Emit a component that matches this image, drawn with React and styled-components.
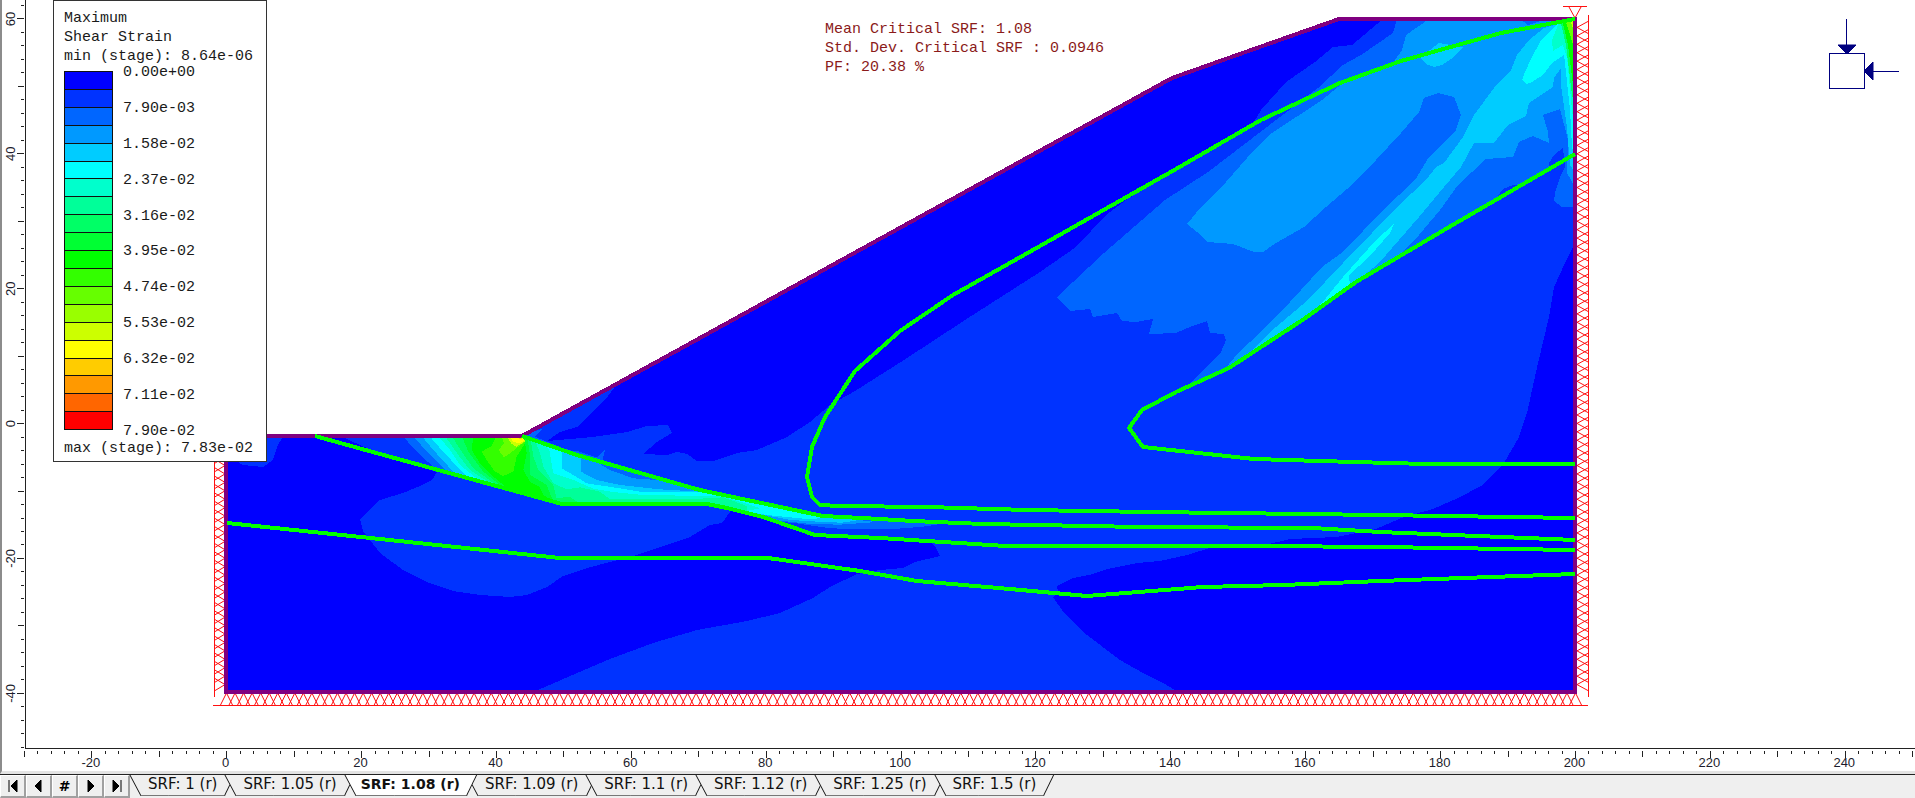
import React, { useState } from "react";
import styled, { createGlobalStyle, css } from "styled-components";

const GlobalStyle = createGlobalStyle`
  html,
  body,
  #root {
    height: 100%;
    margin: 0;
  }
`;

const Window = styled.div`
  display: flex;
  flex-direction: column;
  height: 100%;
  overflow: hidden;
  background: #ffffff;
`;

const Workspace = styled.main`
  flex: 1;
  min-height: 0;
  display: grid;
  grid-template-columns: 25px minmax(0, 1fr);
  grid-template-rows: minmax(0, 1fr) 25px;
`;

const RulerSvg = styled.svg`
  display: block;
  width: 100%;
  height: 100%;
  overflow: hidden;
  box-sizing: border-box;

  line {
    stroke: #222222;
    shape-rendering: crispEdges;
  }

  text {
    font-family: "Liberation Sans", Arial, sans-serif;
    font-size: 13px;
    fill: #1c1c2c;
    text-anchor: middle;
  }
`;

const VerticalRuler = styled(RulerSvg)`
  border-left: 2px solid #8c8c8c;
`;

const HorizontalRuler = styled(RulerSvg)`
  grid-column: 1 / -1;
  border-left: 2px solid #8c8c8c;
  border-bottom: 3px solid #e3e3e3;
`;

const Canvas = styled.section`
  position: relative;
  overflow: hidden;
  border-left: 1px solid #222222;
  border-bottom: 1px solid #222222;
`;

const ModelSvg = styled.svg`
  display: block;
  width: 100%;
  height: 100%;
`;

const Legend = styled.aside`
  position: absolute;
  top: 0;
  left: 27px;
  width: 214px;
  box-sizing: border-box;
  padding: 8px 9px 3px 10px;
  border: 1px solid #333333;
  background: #ffffff;
  color: #1a1a1a;
  font: 15px/19px "Liberation Mono", "Courier New", monospace;
  white-space: nowrap;
`;

const LegendScale = styled.div`
  display: flex;
  gap: 10px;
  height: 359px;
  margin: 5px 0 9px;
`;

const ColorBar = styled.div`
  display: flex;
  flex-direction: column;
  width: 49px;
  box-sizing: border-box;
  border: 1px solid #111111;
`;

const Swatch = styled.div`
  flex: 1;
  background: ${props => props.$color};

  & + & {
    border-top: 1px solid #111111;
  }
`;

const LegendValues = styled.div`
  display: flex;
  flex-direction: column;
  justify-content: space-between;

  span {
    height: 0;
    line-height: 4px;
  }
`;

const Summary = styled.div`
  position: absolute;
  top: 20px;
  left: 799px;
  color: #8b1a1a;
  font: 15px/19px "Liberation Mono", "Courier New", monospace;
  white-space: nowrap;
`;

const StageBar = styled.nav`
  display: flex;
  height: 24px;
  box-sizing: border-box;
  border-top: 1px solid #222222;
  background: #efefef;
  font-family: "DejaVu Sans", Verdana, sans-serif;
`;

const NavButton = styled.button`
  display: flex;
  align-items: center;
  justify-content: center;
  width: 26px;
  height: 23px;
  padding: 0;
  border: 1px solid #ffffff;
  border-right: 2px solid #a0a0a0;
  border-bottom: 2px solid #a0a0a0;
  background: #efefef;
  color: #000000;
  font: bold 14px "DejaVu Sans", Verdana, sans-serif;
`;

const Tabs = styled.div`
  display: flex;
`;

const edge = css`
  content: "";
  position: absolute;
  z-index: -1;
  top: 0;
  width: 60%;
  height: 21px;
  box-sizing: border-box;
  border-bottom: 1px solid #777777;
`;

const Tab = styled.button`
  position: relative;
  z-index: ${props => (props.$active ? 1 : 0)};
  height: 21px;
  padding: ${props => (props.$active ? "0 7px 0 16px" : "0 8px 0 18px")};
  border: none;
  background: none;
  color: #111111;
  font-family: inherit;
  font-size: ${props => (props.$active ? "14px" : "15px")};
  font-weight: ${props => (props.$active ? "bold" : "normal")};
  line-height: 19px;
  white-space: nowrap;

  &::before {
    ${edge}
    left: 5px;
    border-left: 1px solid #111111;
    background: ${props => (props.$active ? "#ffffff" : "#efefef")};
    transform: skewX(28deg);
  }

  &::after {
    ${edge}
    right: -5px;
    border-right: 1px solid #111111;
    background: ${props => (props.$active ? "#ffffff" : "#efefef")};
    transform: skewX(-26deg);
  }
`;

const TabLabel = styled.span`
  display: block;
  height: 21px;
`;

const PALETTE = [
  "#0000ff", "#0033ff", "#0066ff", "#0099ff", "#00ccff",
  "#00ffff", "#00ffcc", "#00ff99", "#00ff66", "#00ff33",
  "#00ff00", "#33ff00", "#66ff00", "#99ff00", "#ccff00",
  "#ffff00", "#ffcc00", "#ff9900", "#ff6600", "#ff0000"
];

const LEGEND_VALUES = [
  "0.00e+00", "7.90e-03", "1.58e-02", "2.37e-02", "3.16e-02", "3.95e-02",
  "4.74e-02", "5.53e-02", "6.32e-02", "7.11e-02", "7.90e-02"
];

const STAGES = ["1", "1.05", "1.08", "1.09", "1.1", "1.12", "1.25", "1.5"];

const SCALE = 6.744;
const toX = x => 226.7 + x * SCALE;
const toY = y => 423.6 - y * SCALE;

const range = (from, to, step) => {
  const list = [];
  for (let v = from; v <= to; v += step) list.push(v);
  return list;
};

const tickSize = v => (v % 20 === 0 ? 6 : v % 10 === 0 ? 5 : 2);

const OUTLINE =
  "226,436 522,436 1172,78 1339,19 1575,19 1575,692 226,692";

// [palette level, outline], painted from the lowest level to the highest
const CONTOURS = [
  [1, "1383,19 1352,45 1333,47 1315,62 1286,82 1261,110 1254,122 1126,200 1106,215 1076,247 1040,272 965,320 904,360 855,391 830,405 810,422 787,437 757,450 737,453 713,461 697,461 687,454 677,452 667,455 643,454 657,442 672,433 668,425 647,426 627,432 593,437 547,441 560,432 577,427 605,400 617,384 522,436 340,436 200,436 200,693 1575,693 1575,19"],
  [0, "1575,243 1565,263 1554,287 1549,317 1538,363 1527,413 1519,437 1504,463 1497,470 1483,485 1458,498 1433,509 1404,517 1376,529 1337,537 1290,539 1265,545 1210,548 1187,555 1160,561 1137,563 1107,569 1093,574 1073,578 1057,586 1058,592 1053,597 1064,613 1087,635 1120,660 1143,673 1163,683 1180,693 1575,693"],
  [0, "226,693 531,693 561,680 610,659 653,643 697,630 747,621 780,613 813,598 830,587 857,574 880,570 903,568 915,562 940,556 935,546 926,539 880,538 815,534 763,517 730,508 730,512 722,523 710,525 690,537 667,545 633,556 610,562 587,568 563,576 547,587 527,595 510,597 480,595 453,591 427,582 403,570 380,553 363,531 360,519 372,507 380,500 403,493 420,486 432,480 437,472 380,454 340,436 226,436"],
  [1, "226,436 283,436 277,447 273,460 263,467 243,465 226,455"],
  [2, "1397,19 1393,33 1361,55 1343,65 1318,88 1208,172 1165,200 1104,253 1057,297 1070,311 1090,309 1093,317 1117,313 1122,321 1136,322 1153,319 1149,334 1176,333 1190,327 1207,321 1210,333 1224,334 1226,340 1221,352 1208,365 1186,388 1229,368 1304,319 1356,282 1443,230 1500,197 1549,168 1549,163 1554,155 1563,148 1565,167 1560,177 1555,193 1554,201 1562,207 1575,207 1575,19"],
  [1, "1498,196 1503,189 1513,185 1520,186"],
  [3, "1429,19 1406,35 1402,50 1393,63 1343,83 1322,100 1272,133 1254,150 1226,182 1201,207 1187,224 1197,232 1208,242 1233,244 1254,252 1263,252 1276,243 1304,227 1326,207 1354,183 1376,160 1401,133 1419,112 1424,98 1438,93 1454,97 1461,115 1456,130 1429,157 1415,180 1383,210 1343,252 1322,267 1290,302 1261,332 1238,353 1225,369 1304,319 1356,282 1397,257 1419,235 1440,210 1458,185 1486,159 1513,157 1519,142 1533,136 1549,143 1548,132 1543,115 1560,109 1568,140 1567,173 1575,187 1575,19"],
  [2, "1520,19 1528,25 1547,19"],
  [4, "1439,43 1430,50 1420,58 1426,64 1434,67 1442,65 1454,57 1463,47"],
  [4, "1250,352 1269,333 1308,300 1343,263 1372,233 1397,207 1426,180 1436,167 1444,163 1463,137 1474,115 1494,88 1511,70 1517,55 1529,40 1544,28 1575,19 1575,173 1570,165 1567,128 1561,85 1561,68 1554,78 1553,87 1529,103 1526,116 1508,125 1494,143 1474,143 1461,167 1444,187 1419,217 1379,263 1356,282 1304,319"],
  [5, "1394,224 1376,240 1343,277 1326,298 1310,315 1350,286 1349,275 1369,257 1390,233"],
  [5, "1562,19 1553,28 1540,42 1532,57 1525,72 1522,80 1527,84 1532,82 1543,75 1552,63 1564,55 1565,63 1570,110 1572,147 1575,157 1575,19"],
  [6, "1561,19 1558,25 1552,40 1553,51 1563,45 1567,57 1572,110 1575,135 1575,19"],
  [8, "1560,19 1566,45 1572,95 1575,105 1575,19"],
  [10, "1562,19 1568,45 1573,85 1575,90 1575,19"],
  [12, "1565,19 1571,38 1575,50 1575,19"],
  [14, "1570,19 1575,34 1575,19"]
];

// Shear band below the toe, on a grid three times finer than the model
const TOE_CONTOURS = [
  [2, "68,108 110,155 175,214 545,312 980,314 1060,328 1190,364 1250,370 1330,382 1400,388 1500,388 1530,388 1630,380 1700,369 1330,348 960,270 427,107"],
  [2, "427,107 490,85 465,110 560,150 600,155 650,172 675,150 665,190"],
  [3, "100,108 140,155 210,224 545,312 980,314 1060,328 1200,362 1290,372 1380,374 1490,366 1330,348 920,262 830,240 760,235 690,210 650,186 427,107"],
  [4, "125,108 160,150 235,232 545,312 980,314 1060,328 1190,352 1230,360 1330,366 1385,368 1440,360 1330,348 960,275 840,268 720,255 650,240 603,215 603,165 427,107"],
  [5, "148,108 185,150 270,241 545,312 980,314 1060,328 1160,345 1290,358 1340,352 1130,305 960,276 780,275 700,262 620,250 580,225 545,205 545,150 427,107"],
  [6, "175,108 210,150 240,195 310,251 545,312 980,314 1100,333 1140,325 1090,308 1030,290 960,287 800,286 700,276 640,266 580,240 520,220 508,150 485,125 427,107"],
  [7, "195,108 235,165 270,210 345,259 545,312 980,314 1100,333 1100,318 1030,292 960,296 800,298 690,298 660,275 600,262 560,268 520,250 490,200 480,160 465,120 427,107"],
  [8, "215,108 245,155 280,205 360,263 545,312 600,312 570,290 530,295 520,255 475,210 460,170 452,118 427,107"],
  [9, "245,108 265,155 310,215 375,267 520,305 500,255 450,225 450,165 442,112"],
  [10, "280,108 275,150 300,190 340,230 390,271 520,305 490,285 480,262 450,245 430,210 440,160 432,108"],
  [11, "350,108 335,138 305,155 320,180 345,215 370,228 400,215 410,170 435,130 430,108"],
  [12, "365,108 372,130 356,150 372,172 390,160 415,140 435,126 430,108"],
  [14, "380,108 395,132 410,140 435,124 430,108"],
  [15, "388,108 400,126 420,130 432,122 428,108"],
  [16, "408,108 416,116 426,116 424,108"]
];

const STRATA = [
  "1575,19 1501,33 1447,48 1401,61 1340,83 1261,120 1176,169 1040,246 953,295 900,331 855,371 825,417 812,447 807,477 812,497 820,505 840,506 927,507 1027,510 1150,512 1380,515 1575,518",
  "522,436 577,455 633,471 700,490 823,516 880,519 913,521 983,524 1140,527 1313,528 1380,532 1575,540",
  "315,436 380,454 562,504 707,504 727,508 763,517 815,535 880,538 927,541 1006,546 1263,546 1380,547 1575,550",
  "227,523 380,539 560,558 768,558 860,571 917,581 1010,589 1087,596 1203,587 1283,585 1380,581 1575,574",
  "1575,154 1444,230 1356,282 1304,319 1229,368 1176,392 1142,410 1129,428 1143,447 1254,459 1354,462 1426,464 1575,464"
];

const rollersBottom = range(0, 158, 1)
  .map(i => {
    const x = 226.5 + i * 8.538;
    return `M${x - 6} 705L${x} 693L${x + 6} 705`;
  })
  .join("");

const rollersSide = (x, base, from) =>
  range(from, 79, 1)
    .map(i => {
      const y = 19 + i * 8.425;
      return `M${base} ${y - 6}L${x} ${y}L${base} ${y + 6}`;
    })
    .join("");

const Contours = ({ list }) =>
  list.map(([level, points], i) => (
    <polygon key={i} points={points} fill={PALETTE[level]} />
  ));

const Model = () => (
  <ModelSvg role="img" aria-label="Maximum shear strain contours">
    <defs>
      <clipPath id="outline">
        <polygon points={OUTLINE} />
      </clipPath>
    </defs>
    <g transform="translate(-26 0)" shapeRendering="crispEdges">
      <g fill="none" stroke="#ff1010" shapeRendering="auto">
        <path d={rollersBottom} />
        <path d={rollersSide(225, 215, 50)} />
        <path d={rollersSide(1577, 1588, 1)} />
        <path d="M1563 6.5H1587M1569 7L1575 18L1581 7" />
        <path d="M213 705.5H1588M214.5 430V697M1588.5 15V697" />
      </g>
      <g clipPath="url(#outline)">
        <polygon points={OUTLINE} fill={PALETTE[0]} />
        <Contours list={CONTOURS} />
        <g transform="translate(380 400) scale(0.33333)">
          <Contours list={TOE_CONTOURS} />
        </g>
      </g>
      <polygon points={OUTLINE} fill="none" stroke="#800080" strokeWidth="4" />
      <g fill="none" stroke="#00ff00" strokeWidth="4" strokeLinejoin="round">
        {STRATA.map(points => (
          <polyline key={points} points={points} />
        ))}
      </g>
      <g stroke="#000080" fill="none" shapeRendering="auto">
        <rect x="1829.5" y="53.5" width="35" height="35" />
        <path d="M1846.5 19V46M1873 71.5H1899" />
        <path d="M1838 45H1856L1847 54ZM1873 62V80L1864 71Z" fill="#000080" />
      </g>
    </g>
  </ModelSvg>
);

const StrainLegend = () => (
  <Legend>
    <div>Maximum</div>
    <div>Shear Strain</div>
    <div>min (stage): 8.64e-06</div>
    <LegendScale>
      <ColorBar>
        {PALETTE.map(color => (
          <Swatch key={color} $color={color} />
        ))}
      </ColorBar>
      <LegendValues>
        {LEGEND_VALUES.map(value => (
          <span key={value}>{value}</span>
        ))}
      </LegendValues>
    </LegendScale>
    <div>max (stage): 7.83e-02</div>
  </Legend>
);

const LeftRuler = () => (
  <VerticalRuler aria-hidden="true">
    <g transform="translate(-2 0)">
      {range(-48, 62, 2).map(v => (
        <line key={v} x1={23 - tickSize(v)} x2="24" y1={toY(v)} y2={toY(v)} />
      ))}
      {range(-40, 60, 20).map(v => (
        <text key={v} transform={`translate(15 ${toY(v)}) rotate(-90)`}>
          {v}
        </text>
      ))}
    </g>
  </VerticalRuler>
);

const BottomRuler = () => (
  <HorizontalRuler aria-hidden="true">
    <g transform="translate(-2 0)">
      {range(-30, 250, 2).map(v => (
        <line key={v} y1="2" y2={3 + tickSize(v)} x1={toX(v)} x2={toX(v)} />
      ))}
      {range(-20, 240, 20).map(v => (
        <text key={v} x={toX(v) - 1} y="18">
          {v}
        </text>
      ))}
    </g>
  </HorizontalRuler>
);

const NAV = [
  { label: "First stage", path: "M3 1V13M11 1V13L5 7Z" },
  { label: "Previous stage", path: "M9 1V13L3 7Z" },
  { label: "Go to stage" },
  { label: "Next stage", path: "M4 1V13L10 7Z" },
  { label: "Last stage", path: "M3 1V13L9 7ZM11 1V13" }
];

const App = () => {
  const [stage, setStage] = useState("1.08");

  return (
    <Window>
      <GlobalStyle />
      <Workspace>
        <LeftRuler />
        <Canvas>
          <Model />
          <StrainLegend />
          <Summary>
            <div>Mean Critical SRF: 1.08</div>
            <div>Std. Dev. Critical SRF : 0.0946</div>
            <div>PF: 20.38 %</div>
          </Summary>
        </Canvas>
        <BottomRuler />
      </Workspace>
      <StageBar>
        {NAV.map(({ label, path }) => (
          <NavButton key={label} type="button" aria-label={label}>
            {path ? (
              <svg width="14" height="14" viewBox="0 0 14 14">
                <path d={path} fill="#000000" stroke="#000000" />
              </svg>
            ) : (
              "#"
            )}
          </NavButton>
        ))}
        <Tabs role="tablist">
          {STAGES.map(name => (
            <Tab
              key={name}
              type="button"
              role="tab"
              aria-selected={name === stage}
              $active={name === stage}
              onClick={() => setStage(name)}
            >
              <TabLabel>SRF: {name} (r)</TabLabel>
            </Tab>
          ))}
        </Tabs>
      </StageBar>
    </Window>
  );
};

export default App;
